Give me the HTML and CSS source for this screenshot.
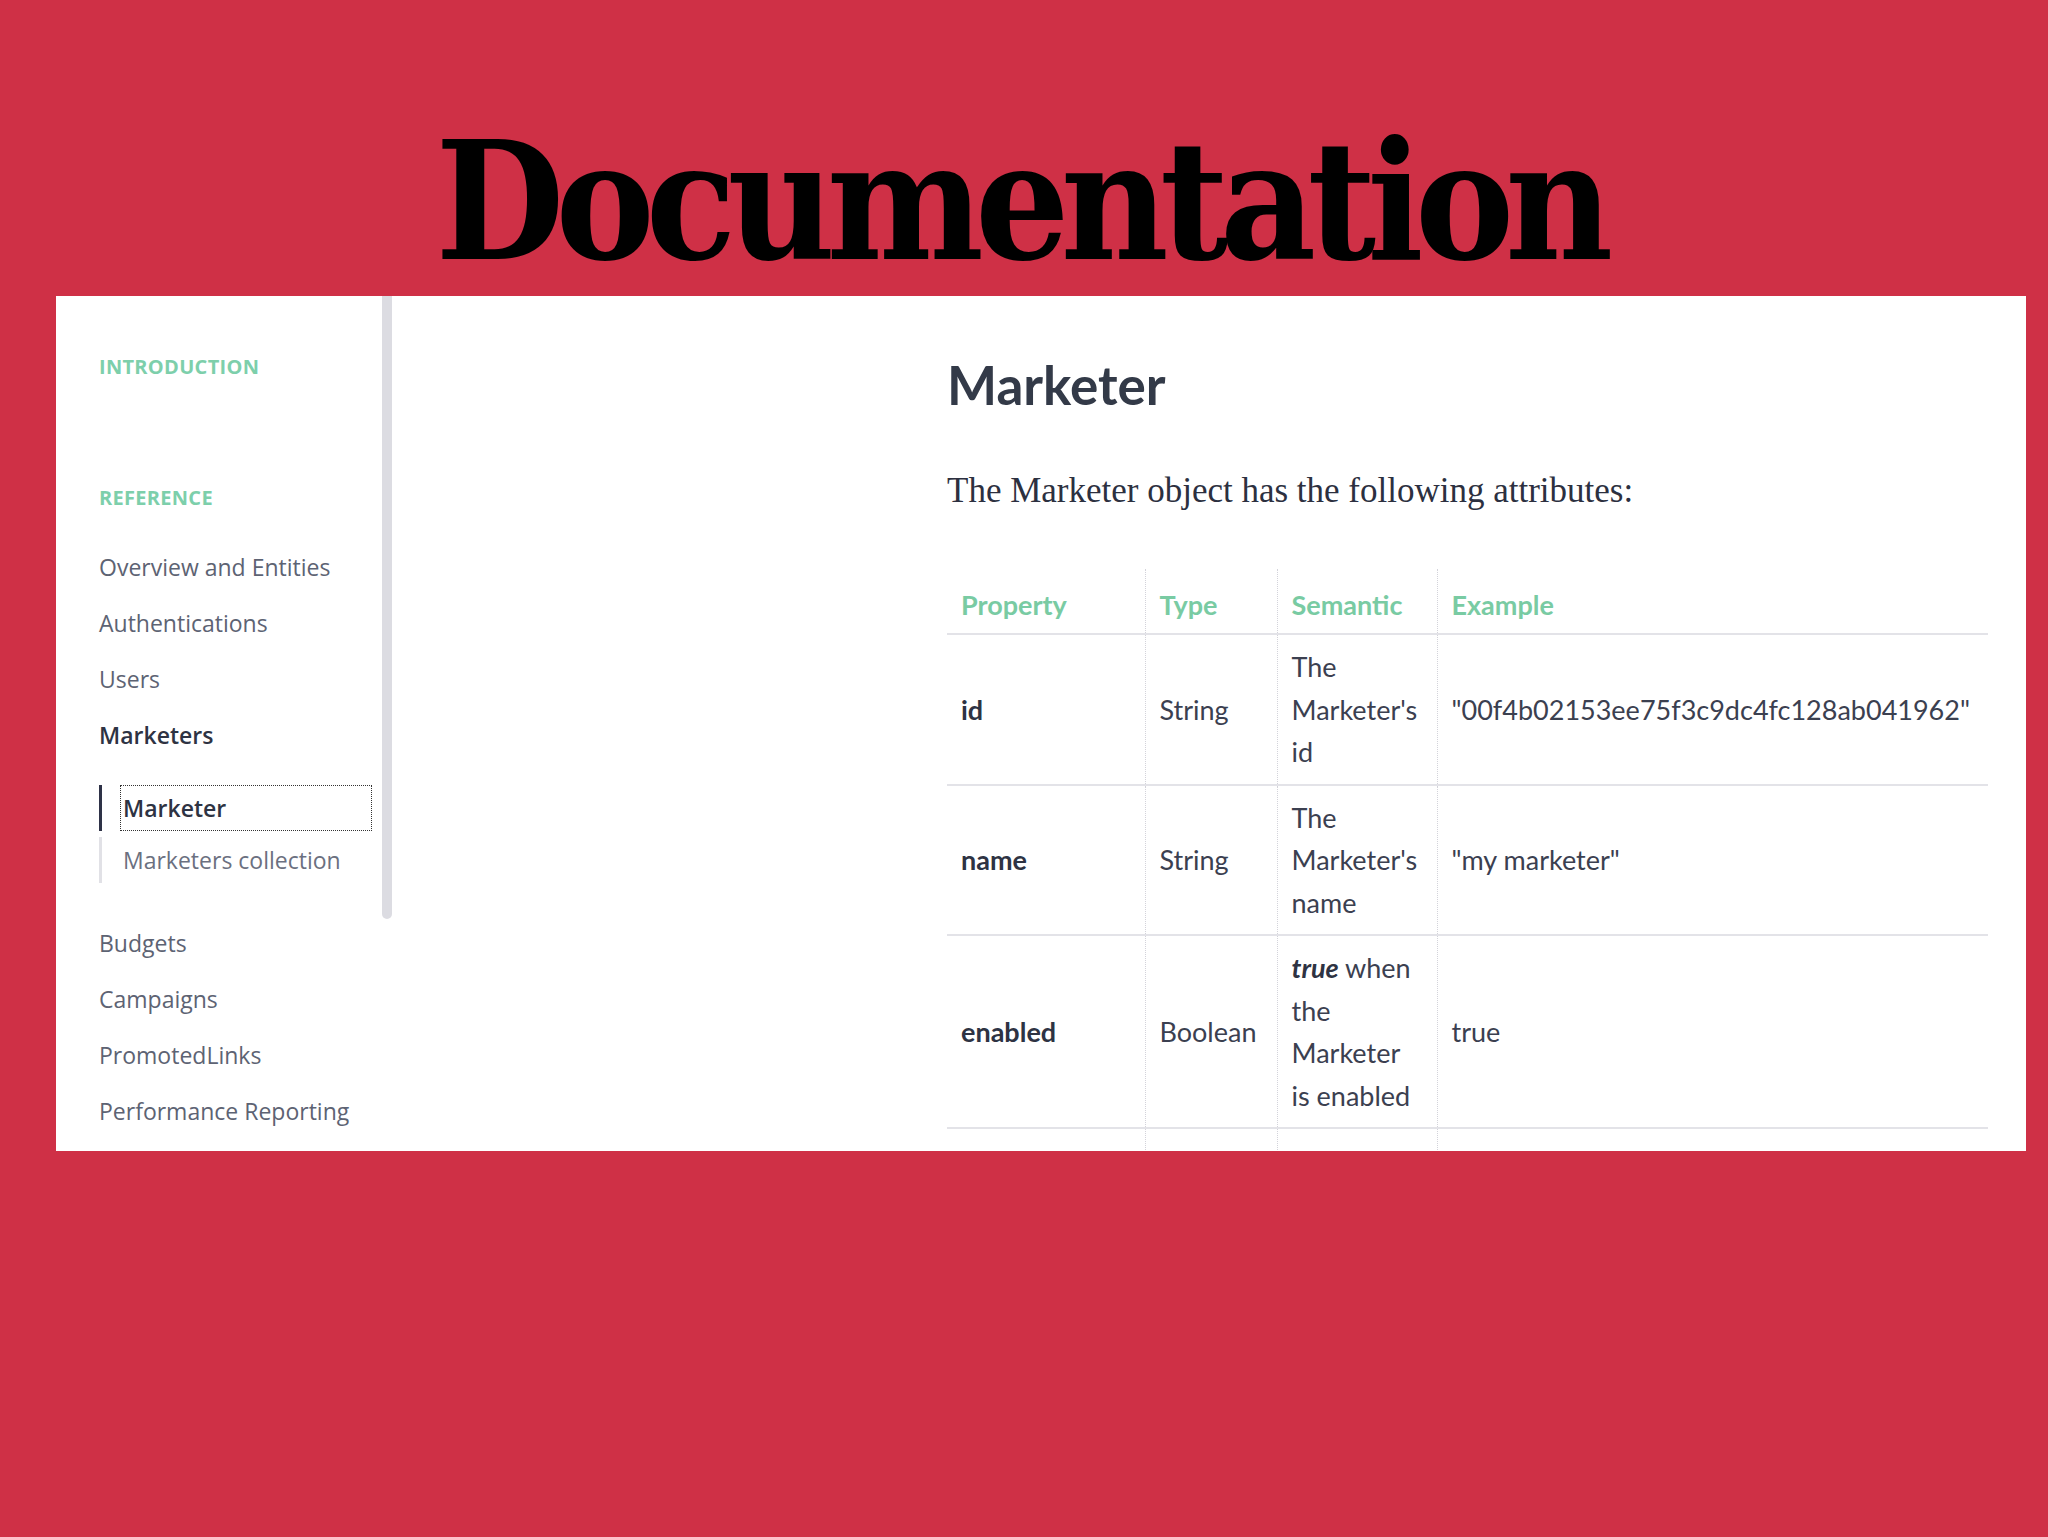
FILE: index.html
```html
<!DOCTYPE html>
<html lang="en">
<head>
<meta charset="utf-8">
<title>Documentation</title>
<link rel="stylesheet" href="styles.css">
</head>
<body>
<header class="top">
  <h1 class="title">Documentation</h1>
</header>
<div class="panel">
  <nav class="sidebar">
    <div class="section">INTRODUCTION</div>
    <div class="section section-ref">REFERENCE</div>
    <ul class="nav">
      <li class="nav-item">Overview and Entities</li>
      <li class="nav-item">Authentications</li>
      <li class="nav-item">Users</li>
      <li class="nav-item nav-current">Marketers</li>
    </ul>
    <ul class="subnav">
      <li class="sub-item sub-active"><span class="sub-link">Marketer</span></li>
      <li class="sub-item"><span class="sub-link">Marketers collection</span></li>
    </ul>
    <ul class="nav nav-lower">
      <li class="nav-item">Budgets</li>
      <li class="nav-item">Campaigns</li>
      <li class="nav-item">PromotedLinks</li>
      <li class="nav-item">Performance Reporting</li>
    </ul>
  </nav>
  <div class="scrollbar"></div>
  <main class="content">
    <h2 class="heading">Marketer</h2>
    <p class="intro">The Marketer object has the following attributes:</p>
    <table class="attrs">
      <colgroup>
        <col class="c1"><col class="c2"><col class="c3"><col class="c4">
      </colgroup>
      <thead>
        <tr><th>Property</th><th>Type</th><th>Semantic</th><th>Example</th></tr>
      </thead>
      <tbody>
        <tr>
          <td class="prop">id</td>
          <td>String</td>
          <td>The<br>Marketer's<br>id</td>
          <td>"00f4b02153ee75f3c9dc4fc128ab041962"</td>
        </tr>
        <tr>
          <td class="prop">name</td>
          <td>String</td>
          <td>The<br>Marketer's<br>name</td>
          <td>"my marketer"</td>
        </tr>
        <tr>
          <td class="prop">enabled</td>
          <td>Boolean</td>
          <td><em class="kw">true</em> when<br>the<br>Marketer<br>is enabled</td>
          <td>true</td>
        </tr>
        <tr class="cut">
          <td></td><td></td><td></td><td></td>
        </tr>
      </tbody>
    </table>
  </main>
</div>
</body>
</html>
```

FILE: styles.css
```css
html, body {
  margin: 0;
  padding: 0;
}
body {
  background: #cf3046;
  width: 2048px;
  height: 1537px;
  overflow: hidden;
  font-family: "Open Sans", "DejaVu Sans", sans-serif;
}
.top {
  height: 296px;
  box-sizing: border-box;
  padding-top: 119px;
  text-align: center;
}
.title {
  margin: 0;
  font-family: "DejaVu Serif", serif;
  font-stretch: condensed;
  font-weight: bold;
  font-size: 165px;
  line-height: 165px;
  color: #000;
  letter-spacing: -8.7px;
  text-indent: -8px;
}
.panel {
  margin-left: 56px;
  width: 1970px;
  height: 855px;
  background: #fff;
  display: flex;
  overflow: hidden;
}
.sidebar {
  width: 326px;
  flex: none;
  box-sizing: border-box;
  padding: 56px 0 0 43px;
}
.section {
  height: 30px;
  line-height: 30px;
  font-family: "Open Sans", sans-serif;
  font-weight: 700;
  font-size: 20px;
  letter-spacing: 0.3px;
  color: #7dcfab;
}
.section-ref {
  margin-top: 101px;
}
.nav {
  list-style: none;
  margin: 26px 0 0 0;
  padding: 0;
}
.nav-item {
  height: 56px;
  line-height: 56px;
  font-size: 23px;
  font-weight: 400;
  color: #5d6373;
  white-space: nowrap;
}
.nav-current {
  font-weight: 600;
  color: #2e3343;
}
.subnav {
  list-style: none;
  margin: 22px 0 0 0;
  padding: 0;
  display: flex;
  flex-direction: column;
  gap: 6px;
}
.sub-item {
  border-left: 3px solid #e1e1e6;
  height: 46px;
  display: flex;
  align-items: stretch;
}
.sub-active {
  border-left-color: #2e3247;
}
.sub-link {
  margin-left: 18px;
  padding-left: 3px;
  width: 249px;
  line-height: 46px;
  font-size: 23px;
  color: #6b7080;
  white-space: nowrap;
}
.sub-active .sub-link {
  outline: 1px dotted #333;
  outline-offset: -1px;
  color: #2e3343;
  font-weight: 600;
}
.nav-lower {
  margin-top: 32px;
}
.scrollbar {
  flex: none;
  width: 10px;
  height: 623px;
  background: #dcdce2;
  border-radius: 0 0 5px 5px;
}
.content {
  flex: 1;
  box-sizing: border-box;
  padding: 57px 38px 0 555px;
}
.heading {
  margin: 0;
  font-family: Lato, sans-serif;
  font-weight: 700;
  font-size: 53px;
  line-height: 64px;
  color: #333a48;
}
.intro {
  margin: 55px 0 0 0;
  font-family: "Liberation Serif", serif;
  font-size: 35px;
  line-height: 38px;
  color: #2c3040;
}
.attrs {
  margin-top: 59px;
  width: 1041px;
  border-collapse: collapse;
  table-layout: fixed;
  font-family: Lato, sans-serif;
  font-size: 27px;
  color: #3b4050;
}
.c1 { width: 198px; }
.c2 { width: 132px; }
.c3 { width: 160px; }
.c4 { width: 551px; }
.attrs th {
  text-align: left;
  font-weight: 700;
  color: #79cba3;
  height: 65px;
  padding: 6px 14px 0 14px;
  box-sizing: border-box;
  border-bottom: 2px solid #e3e3e8;
  vertical-align: middle;
}
.attrs td {
  padding: 11px 14px 10px 14px;
  line-height: 42.5px;
  vertical-align: middle;
  border-bottom: 2px solid #e3e3e8;
}
.attrs th + th,
.attrs td + td {
  border-left: 1px dotted #d3d3da;
}
.prop {
  font-weight: 700;
  color: #2e3343;
}
.kw {
  font-weight: 700;
  font-style: italic;
  color: #2e3343;
}
.cut td {
  height: 80px;
  border-bottom: none;
}
```
